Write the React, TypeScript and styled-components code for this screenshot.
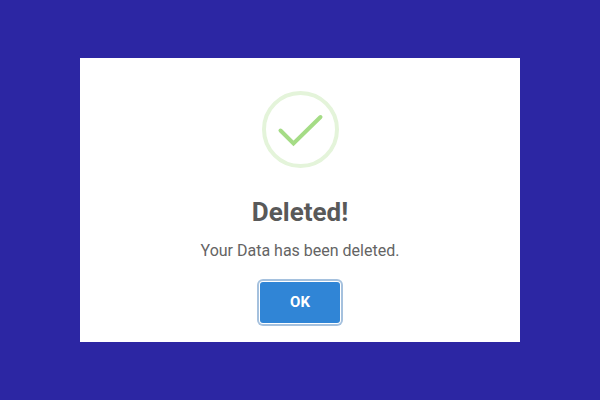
import React from 'react';
import styled, { createGlobalStyle } from 'styled-components';

const GlobalStyle = createGlobalStyle`
  * { box-sizing: border-box; }
  body { margin: 0; background: #2c26a3; font-family: Roboto, "Liberation Sans", sans-serif; }
`;

const Page = styled.main`
  min-height: 100vh;
  display: flex;
  align-items: center;
  justify-content: center;
  padding: 16px 80px;
`;

const Dialog = styled.section`
  flex: 1;
  max-width: 480px;
  display: flex;
  flex-direction: column;
  align-items: center;
  padding: 33px 16px 19px;
  background: #fff;
  text-align: center;
`;

const SuccessIcon = styled.svg`
  display: block;
  width: 77px;
  height: 77px;
`;

const Title = styled.h1`
  margin: 28px 0 0;
  color: #595959;
  font-size: 26px;
  line-height: 32px;
  font-weight: 700;
`;

const Message = styled.p`
  margin: 13px 0 0;
  color: #646464;
  font-size: 16px;
  line-height: 20px;
`;

const ConfirmButton = styled.button`
  min-width: 80px;
  margin: 21px 0 0;
  padding: 10px 16px 11px;
  border: 0;
  border-radius: 3px;
  background: #3085d6;
  box-shadow: 0 0 0 1px #fff, 0 0 0 3px #a5c1de;
  color: #fff;
  font: 700 15px/20px Roboto, "Liberation Sans", sans-serif;
  cursor: pointer;
`;

export default function App() {
  return (
    <>
      <GlobalStyle />
      <Page>
        <Dialog role="alertdialog" aria-labelledby="dialog-title" aria-describedby="dialog-message">
          <SuccessIcon viewBox="0 0 77 77" fill="none" aria-hidden="true">
            <circle cx="38.5" cy="38.5" r="36.5" stroke="#e4f4da" strokeWidth="4" />
            <path d="M18.5 39.5 31.5 52.5 58.5 26" stroke="#a5dc86" strokeWidth="4" strokeLinecap="round" />
          </SuccessIcon>
          <Title id="dialog-title">Deleted!</Title>
          <Message id="dialog-message">Your Data has been deleted.</Message>
          <ConfirmButton type="button">OK</ConfirmButton>
        </Dialog>
      </Page>
    </>
  );
}
